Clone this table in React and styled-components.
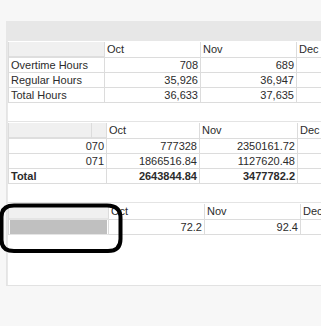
import React from 'react'
import styled, { createGlobalStyle } from 'styled-components'

const GlobalStyle = createGlobalStyle`
	html, body {
		margin: 0;
		padding: 0;
		background: #f7f7f7;
		overflow: hidden;
	}
	body {
		font-family: 'Liberation Sans', Arial, sans-serif;
		font-size: 11px;
		color: #2b2b2b;
	}
`

const Page = styled.div`
	position: relative;
	width: 321px;
	height: 326px;
	padding: 21px 0 0 6px;
	box-sizing: border-box;
`

const Panel = styled.div`
	width: 330px;
	height: 264px;
	background: #fff;
	border-left: 1px solid #e4e4e4;
	border-bottom: 1px solid #e2e2e2;
	display: flex;
	flex-direction: column;
`

const TitleBar = styled.div`
	height: 20px;
	background: #e7e7e7;
	margin-left: -1px;
`

const Content = styled.div`
	flex: 1;
	border-left: 1px solid #e8e8e8;
	display: flex;
	flex-direction: column;
`

const Section = styled.div`
	margin-top: ${p => p.$gap || 0}px;
	padding-top: ${p => p.$pad || 0}px;
	border-top: ${p => (p.$line ? '1px solid #e4e4e4' : 'none')};
`

const Grid = styled.div`
	border-left: 1px solid #dcdcdc;
	display: flex;
	flex-direction: column;
`

const Row = styled.div`
	display: flex;
	height: ${p => p.$h || 15}px;
`

const Cell = styled.div`
	flex: 0 0 ${p => p.$w}px;
	box-sizing: border-box;
	border-right: 1px solid #dcdcdc;
	border-bottom: ${p => p.$bb || 1}px solid ${p => p.$bc || '#dcdcdc'};
	padding: 0 2px 0 2px;
	line-height: 14px;
	white-space: nowrap;
	overflow: hidden;
	text-align: ${p => p.$align || 'left'};
	font-weight: ${p => (p.$bold ? 700 : 400)};
	background: ${p => p.$bg || '#fff'};
`

const Selected = styled.div`
	height: 100%;
	background: #c0c0c0;
	margin: 0 -1px 0 -1px;
`

const Annotation = styled.svg`
	position: absolute;
	left: 0;
	top: 200px;
`

const table1 = [
	['Overtime Hours', '708', '689'],
	['Regular Hours', '35,926', '36,947'],
	['Total Hours', '36,633', '37,635'],
]

const table2 = [
	['070', '777328', '2350161.72'],
	['071', '1866516.84', '1127620.48'],
]

export default function App() {
	return (
		<Page>
			<GlobalStyle />
			<Panel>
				<TitleBar />
				<Content>
					<Section $pad={1}>
						<Grid>
							<Row $h={16}>
								<Cell $w={96} $bg='#f0f0f0' $bb={2} $bc='#dedede' />
								<Cell $w={96}>Oct</Cell>
								<Cell $w={96}>Nov</Cell>
								<Cell $w={60}>Dec</Cell>
							</Row>
							{table1.map(([label, oct, nov]) => (
								<Row key={label}>
									<Cell $w={96}>{label}</Cell>
									<Cell $w={96} $align='right'>{oct}</Cell>
									<Cell $w={96} $align='right'>{nov}</Cell>
									<Cell $w={60} />
								</Row>
							))}
						</Grid>
					</Section>

					<Section $gap={18} $pad={1} $line>
						<Grid>
							<Row $h={16}>
								<Cell $w={83} $bg='#f0f0f0' $bb={2} $bc='#dedede' />
								<Cell $w={15} $bg='#f0f0f0' $bb={2} $bc='#dedede' />
								<Cell $w={93}>Oct</Cell>
								<Cell $w={98}>Nov</Cell>
								<Cell $w={60}>Dec</Cell>
							</Row>
							{table2.map(([label, oct, nov]) => (
								<Row key={label}>
									<Cell $w={98} $align='right'>{label}</Cell>
									<Cell $w={93} $align='right'>{oct}</Cell>
									<Cell $w={98} $align='right'>{nov}</Cell>
									<Cell $w={60} />
								</Row>
							))}
							<Row>
								<Cell $w={98} $bold>Total</Cell>
								<Cell $w={93} $align='right' $bold>2643844.84</Cell>
								<Cell $w={98} $align='right' $bold>3477782.2</Cell>
								<Cell $w={60} />
							</Row>
						</Grid>
					</Section>

					<Section $gap={18} $pad={1} $line>
						<Grid>
							<Row $h={16}>
								<Cell $w={100} $bg='#f0f0f0' $bb={2} $bc='#e4e4e4' />
								<Cell $w={96}>Oct</Cell>
								<Cell $w={96}>Nov</Cell>
								<Cell $w={60}>Dec</Cell>
							</Row>
							<Row>
								<Cell $w={100} $bc='#e4e4e4'>
									<Selected />
								</Cell>
								<Cell $w={96} $align='right'>72.2</Cell>
								<Cell $w={96} $align='right'>92.4</Cell>
								<Cell $w={60} />
							</Row>
						</Grid>
					</Section>
				</Content>
			</Panel>
			<Annotation width='128' height='58' viewBox='0 0 128 58'>
				<path
					d='M 14 5.5 H 107 Q 120.5 5.5 120.5 18 V 39 Q 120.5 51 108 51 H 14 Q 1.5 51 1.5 40 V 17 Q 1.5 5.5 14 5.5 Z'
					fill='none'
					stroke='#000'
					strokeWidth='4'
				/>
			</Annotation>
		</Page>
	)
}
